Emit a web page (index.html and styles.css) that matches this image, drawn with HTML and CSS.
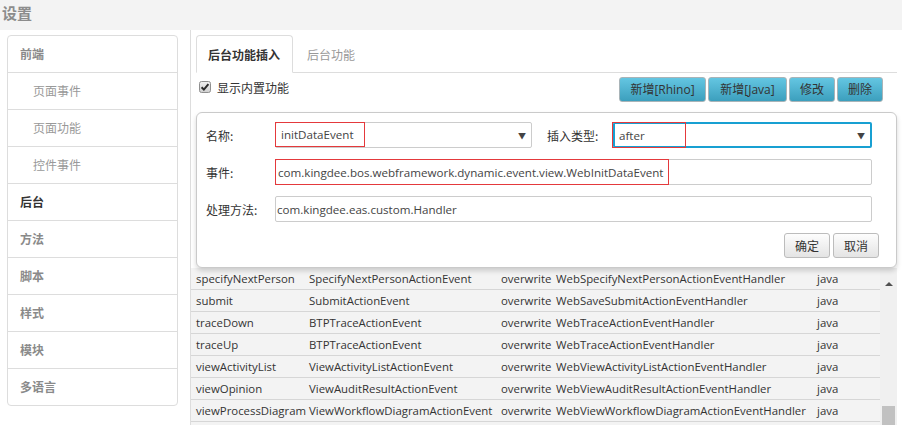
FILE: index.html
```html
<!DOCTYPE html>
<html lang="zh-CN">
<head>
<meta charset="utf-8">
<title>设置</title>
<link rel="stylesheet" href="styles.css">
</head>
<body>
<div class="app">
  <header class="topbar"><h1>设置</h1></header>
  <div class="body">
    <aside class="side">
      <ul class="menu">
        <li class="grp">前端</li>
        <li class="sub">页面事件</li>
        <li class="sub">页面功能</li>
        <li class="sub">控件事件</li>
        <li class="grp active">后台</li>
        <li class="grp">方法</li>
        <li class="grp">脚本</li>
        <li class="grp">样式</li>
        <li class="grp">模块</li>
        <li class="grp">多语言</li>
      </ul>
    </aside>
    <main class="main">
      <div class="tabs">
        <div class="tab active">后台功能插入</div>
        <div class="tab">后台功能</div>
      </div>
      <div class="toolbar">
        <label class="chk">
          <svg class="chkbox" width="12" height="12" viewBox="0 0 12 12">
            <defs><linearGradient id="cg" x1="0" y1="0" x2="0" y2="1"><stop offset="0" stop-color="#f0f0f0"/><stop offset="1" stop-color="#cfcfcf"/></linearGradient></defs>
            <rect x="0.5" y="0.5" width="11" height="11" rx="2" fill="url(#cg)" stroke="#8f8f8f"/>
            <path d="M2.6 6.2 L4.9 8.6 L9.4 3.2" fill="none" stroke="#2a2a2a" stroke-width="2"/>
          </svg>
          <span>显示内置功能</span>
        </label>
        <div class="btns">
          <button class="btn-blue w-rhino">新增[Rhino]</button>
          <button class="btn-blue w-java">新增[Java]</button>
          <button class="btn-blue w-small">修改</button>
          <button class="btn-blue w-small">删除</button>
        </div>
      </div>
      <div class="panel">
        <div class="frow">
          <span class="lbl">名称:</span>
          <div class="select sel1"><span class="mark m1">initDataEvent</span><span class="arrow">▼</span></div>
          <span class="lbl lbl2">插入类型:</span>
          <div class="select sel2"><span class="mark m2">after</span><span class="arrow">▼</span></div>
        </div>
        <div class="frow">
          <span class="lbl">事件:</span>
          <div class="input"><span class="mark m3">com.kingdee.bos.webframework.dynamic.event.view.WebInitDataEvent</span></div>
        </div>
        <div class="frow">
          <span class="lbl">处理方法:</span>
          <div class="input"><span class="val">com.kingdee.eas.custom.Handler</span></div>
        </div>
        <div class="frow actions">
          <button class="btn-grey">确定</button>
          <button class="btn-grey">取消</button>
        </div>
      </div>
      <div class="grid">
        <div class="rows">
          <div class="row"><span>specifyNextPerson</span><span>SpecifyNextPersonActionEvent</span><span>overwrite</span><span>WebSpecifyNextPersonActionEventHandler</span><span>java</span></div>
          <div class="row"><span>submit</span><span>SubmitActionEvent</span><span>overwrite</span><span>WebSaveSubmitActionEventHandler</span><span>java</span></div>
          <div class="row"><span>traceDown</span><span>BTPTraceActionEvent</span><span>overwrite</span><span>WebTraceActionEventHandler</span><span>java</span></div>
          <div class="row"><span>traceUp</span><span>BTPTraceActionEvent</span><span>overwrite</span><span>WebTraceActionEventHandler</span><span>java</span></div>
          <div class="row"><span>viewActivityList</span><span>ViewActivityListActionEvent</span><span>overwrite</span><span>WebViewActivityListActionEventHandler</span><span>java</span></div>
          <div class="row"><span>viewOpinion</span><span>ViewAuditResultActionEvent</span><span>overwrite</span><span>WebViewAuditResultActionEventHandler</span><span>java</span></div>
          <div class="row"><span>viewProcessDiagram</span><span>ViewWorkflowDiagramActionEvent</span><span>overwrite</span><span>WebViewWorkflowDiagramActionEventHandler</span><span>java</span></div>
          <div class="row"><span></span><span></span><span></span><span></span><span></span></div>
        </div>
        <div class="scroll">
          <span class="up"></span>
          <span class="thumb"></span>
        </div>
      </div>
    </main>
  </div>
</div>
</body>
</html>
```

FILE: styles.css
```css
* { box-sizing: border-box; }
html, body { margin: 0; padding: 0; }
body {
  font-family: "Open Sans", "Noto Sans CJK SC", sans-serif;
  font-size: 12px;
  color: #333;
  background: #f3f3f3;
  overflow: hidden;
}
.app { height: 425px; display: flex; flex-direction: column; }
.topbar { height: 30px; flex: none; background: #f3f3f3; padding: 2px 0 0 2px; }
.topbar h1 {
  margin: 0;
  font-family: "Noto Sans CJK SC", sans-serif;
  font-size: 15px;
  line-height: 22px;
  font-weight: bold;
  color: #8c8c8c;
}
.body { flex: 1; display: flex; min-height: 0; }

.side { width: 191px; flex: none; background: #fff; border-right: 1px solid #ddd; padding: 5px 0 0 7px; }
.menu { list-style: none; margin: 0; padding: 0; width: 171px; border: 1px solid #ddd; border-radius: 4px; }
.menu li {
  height: 37px;
  line-height: 36px;
  border-top: 1px solid #ddd;
  padding-left: 12px;
  font-family: "Noto Sans CJK SC", sans-serif;
  font-size: 12px;
  font-weight: bold;
  color: #8a8a8a;
}
.menu li:first-child { border-top: 0; height: 36px; }
.menu li.sub { padding-left: 25px; font-weight: normal; color: #999; }
.menu li.active { color: #333; }

.main { flex: 1; min-width: 0; background: #fff; display: flex; flex-direction: column; }

.tabs { display: flex; margin: 5px 5px 0 5px; height: 38px; border-bottom: 1px solid #ddd; flex: none; }
.tab {
  height: 38px;
  padding: 2px 11px 0 11px;
  line-height: 34px;
  font-family: "Noto Sans CJK SC", sans-serif;
  font-size: 12px;
  color: #999;
  margin-left: 2px;
  border: 1px solid transparent;
}
.tab.active {
  margin-left: 0;
  width: 97px;
  color: #333;
  font-weight: bold;
  background: #fff;
  border: 1px solid #ddd;
  border-bottom-color: #fff;
  border-radius: 4px 4px 0 0;
}

.toolbar { height: 39px; flex: none; display: flex; align-items: flex-start; justify-content: space-between; padding: 4px 19px 0 8px; }
.chk { display: flex; align-items: center; gap: 6px; margin-top: 2px; height: 16px; font-family: "Noto Sans CJK SC", sans-serif; font-size: 12px; color: #333; }
.chkbox { display: block; }
.btns { display: flex; gap: 2px; }
.btn-blue {
  height: 25px;
  padding: 0;
  font-family: "Open Sans", "Noto Sans CJK SC", sans-serif;
  font-size: 12px;
  color: #333;
  border: 1px solid #a9b4b8;
  border-radius: 3px;
  background: linear-gradient(#64c6e2, #3c9fbd);
  line-height: 22px;
}
.w-rhino { width: 87px; }
.w-java { width: 79px; }
.w-small { width: 46px; }

.panel {
  position: relative;
  z-index: 2;
  margin: 0 5px;
  height: 156px;
  flex: none;
  background: #fff;
  border: 1px solid #cacaca;
  border-radius: 6px;
  box-shadow: 0 3px 5px rgba(0,0,0,0.16);
  padding: 9px 17px 0 9px;
  display: flex;
  flex-direction: column;
  gap: 11px;
}
.frow { display: flex; align-items: center; height: 26px; }
.lbl { width: 69px; flex: none; font-family: "Noto Sans CJK SC", sans-serif; font-size: 12px; color: #333; }
.lbl2 { width: 66px; margin-left: 15px; }
.select, .input {
  height: 26px;
  display: flex;
  align-items: stretch;
  border: 1px solid #ccc;
  border-radius: 2px;
  background: #fff;
  font-size: 11.6px;
  color: #444;
  white-space: nowrap;
  overflow: visible;
}
.sel1 { width: 257px; }
.sel2 { width: 259px; border: 2px solid #18a0d2; }
.input { width: 597px; }
.mark { display: flex; align-items: center; border: 1px solid #e4393c; white-space: nowrap; }
.m1 { width: 90px; margin: -1px 0 0 -1px; padding-left: 5px; }
.m2 { width: 74px; margin: -2px 0 -2px -3px; padding-left: 6px; }
.m3 { width: 394px; margin: -1px 0 -1px -1px; padding-left: 2px; }
.val { display: flex; align-items: center; padding-left: 1px; }
.arrow { margin-left: auto; display: flex; align-items: center; padding-right: 5px; font-size: 8px; color: #444; }
.actions { justify-content: flex-end; gap: 3px; height: 25px; }
.btn-grey {
  width: 46px;
  height: 25px;
  padding: 0;
  font-family: "Noto Sans CJK SC", sans-serif;
  font-size: 12px;
  color: #333;
  border: 1px solid #bcbcbc;
  border-radius: 3px;
  background: linear-gradient(#fdfdfd, #e4e4e4);
}

.grid { flex: 1; min-height: 0; display: flex; margin-right: 5px; background: #f3f3f3; overflow: hidden; }
.rows { flex: 1; }
.row {
  display: grid;
  grid-template-columns: 113px 192px 55px 261px 63px;
  padding-left: 5px;
  height: 22px;
  line-height: 21px;
  border-bottom: 1px solid #d6d6d6;
  white-space: nowrap;
  font-size: 11.4px;
  color: #333;
}
.row span { overflow: visible; }
.scroll { width: 17px; flex: none; background: #f0f0f0; display: flex; flex-direction: column; align-items: center; }
.up { margin-top: 14px; width: 0; height: 0; border-left: 4px solid transparent; border-right: 4px solid transparent; border-bottom: 4px solid #505050; }
.thumb { margin-top: 120px; width: 13px; height: 40px; background: #c1c1c1; }
```
